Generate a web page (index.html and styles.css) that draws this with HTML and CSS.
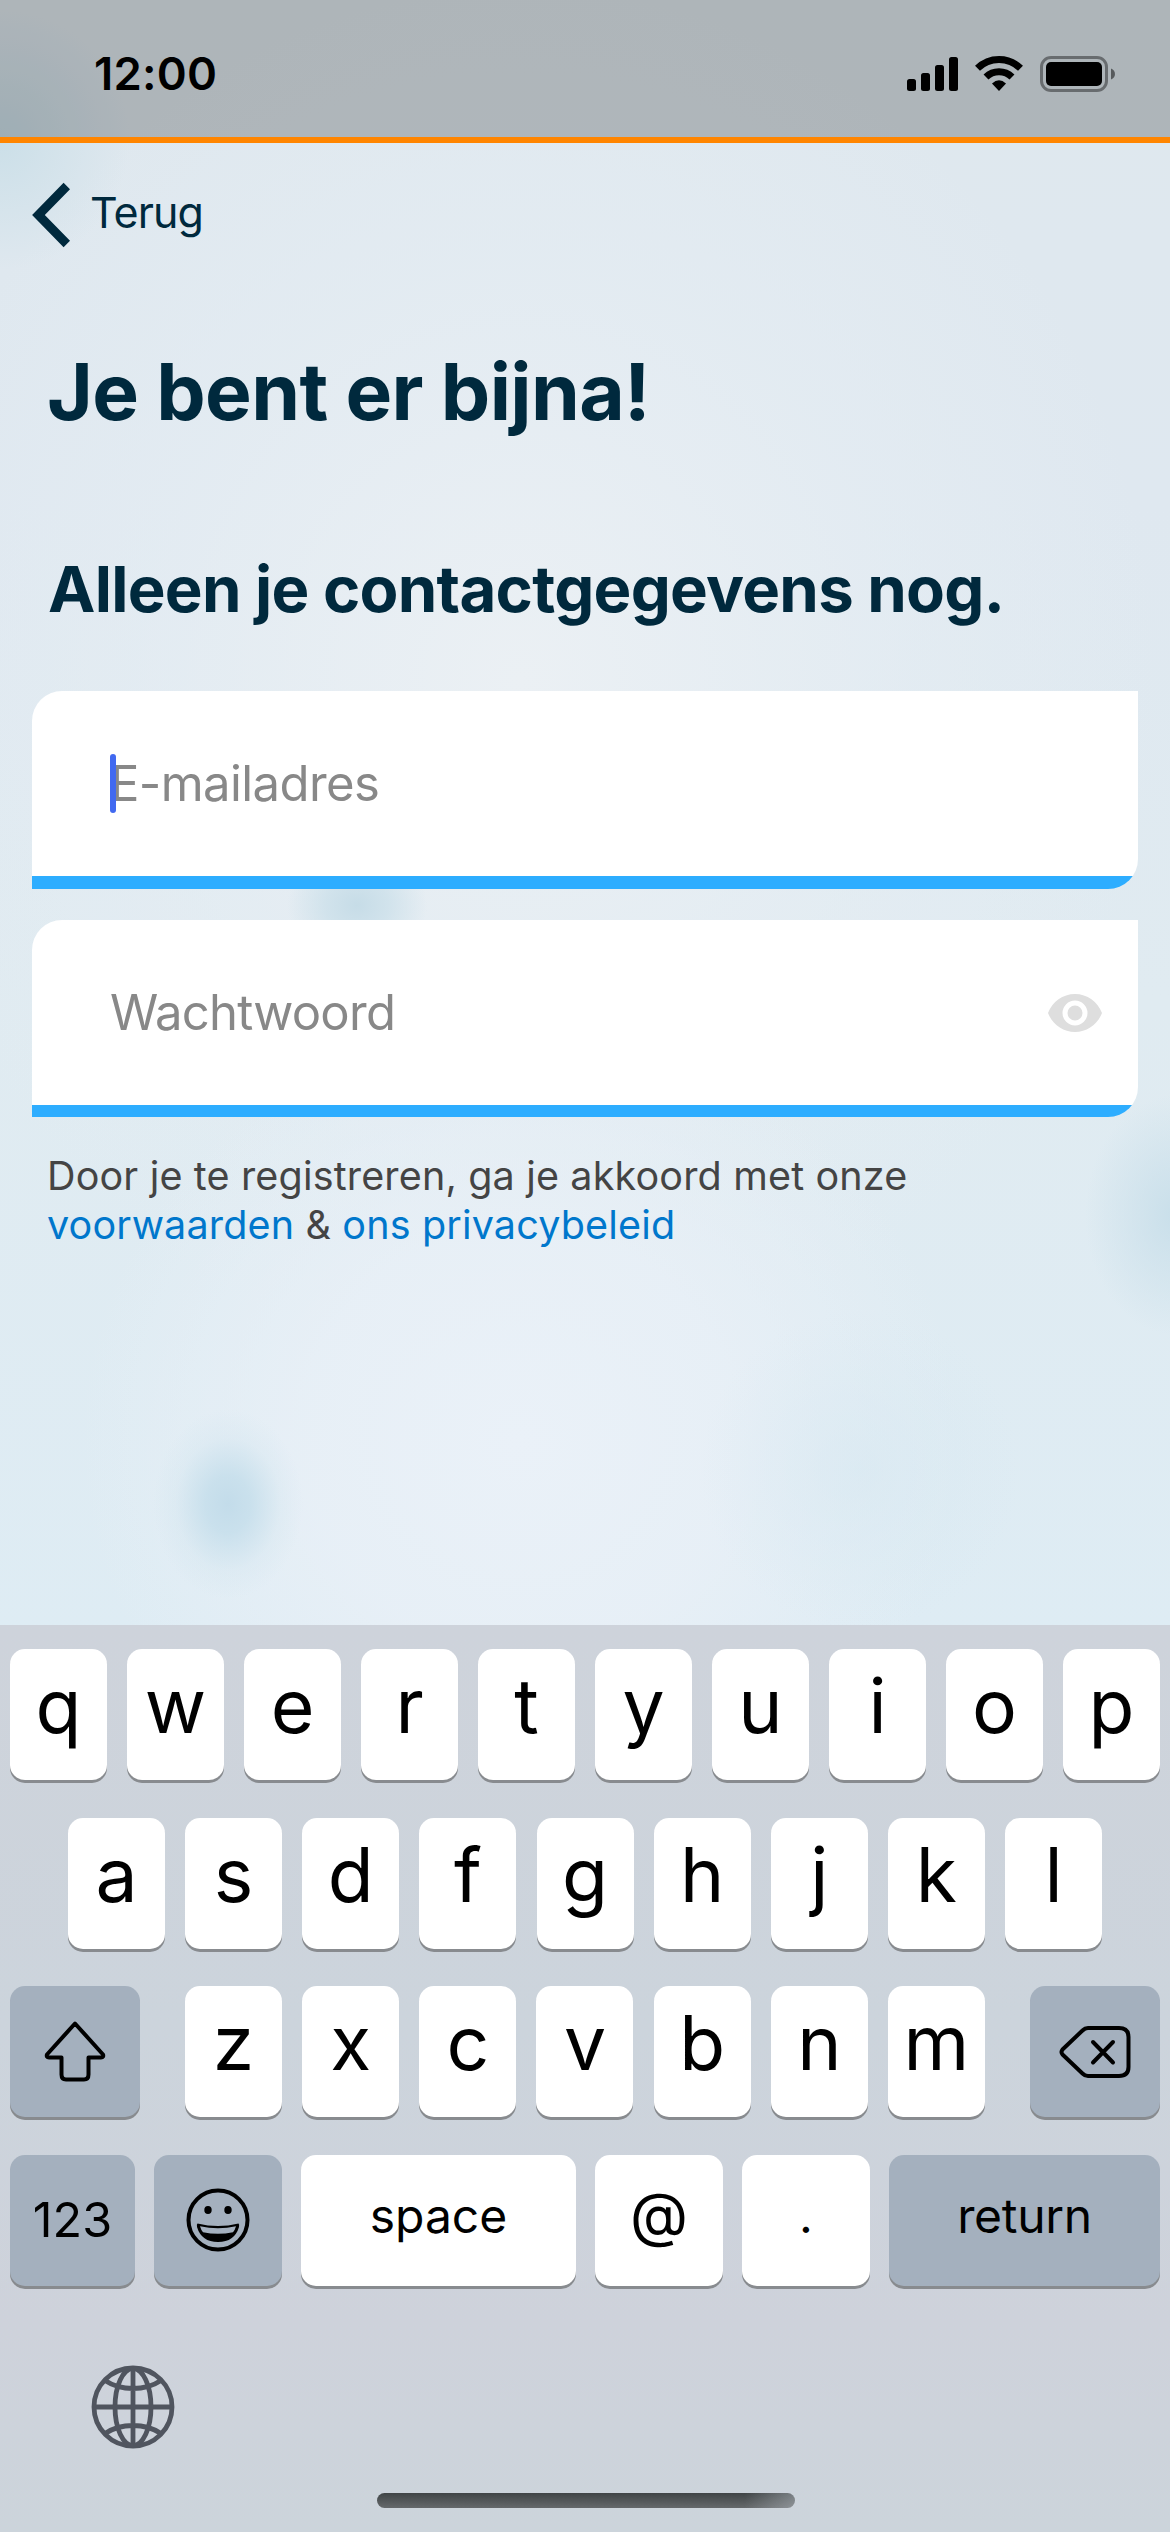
FILE: index.html
```html
<!DOCTYPE html>
<html lang="nl">
<head>
<meta charset="utf-8">
<title>Registreren</title>
<link rel="stylesheet" href="styles.css">
</head>
<body>
<div class="screen">
  <header class="status">
    <span class="time">12:00</span>
    <svg class="status-icons" width="210" height="38" viewBox="0 0 210 38">
      <rect x="0" y="24" width="9" height="12" rx="2.5"/>
      <rect x="14" y="18" width="9" height="18" rx="2.5"/>
      <rect x="28" y="10" width="9" height="26" rx="2.5"/>
      <rect x="42" y="2" width="9" height="34" rx="2.5"/>
      <g fill="none" stroke="#000" stroke-width="7">
        <path d="M70.5 13.3A30.500 30.500 0 0 1 113.500 13.300"/>
        <path d="M79 22.100A18.500 18.500 0 0 1 105 22.100"/>
      </g>
      <path d="M85 28.500Q92 22.200 99 28.500L92 36Z"/>
      <rect x="134.500" y="2.500" width="65" height="33" rx="9.500" fill="none" stroke="#000" stroke-opacity=".4" stroke-width="3"/>
      <rect x="139" y="7" width="56" height="24" rx="5"/>
      <path d="M204 13.500C209.300 15.500 209.300 22.500 204 24.500Z" opacity=".5"/>
    </svg>
  </header>
  <main class="page">
    <nav class="back">
      <svg width="38" height="74" viewBox="0 0 38 74"><path d="M34.800 8L6.400 37L34.800 66" fill="none" stroke="#00293d" stroke-width="9"/></svg>
      <span>Terug</span>
    </nav>
    <h1>Je bent er bijna!</h1>
    <h2>Alleen je contactgegevens nog.</h2>
    <div class="field"><span class="caret"></span><span class="mail">E-mailadres</span></div>
    <div class="field second"><span class="pass">Wachtwoord</span>
      <svg class="eye" width="54" height="38" viewBox="0 0 54 38"><path fill="#dedede" fill-rule="evenodd" d="M27 0C14.700 0 4.300 7.800 0 19C4.300 30.200 14.700 38 27 38S49.700 30.200 54 19C49.700 7.800 39.300 0 27 0ZM27 31.500A12.500 12.500 0 1 1 27 6.500A12.500 12.500 0 0 1 27 31.500ZM27 11.500A7.500 7.500 0 1 0 27 26.500A7.500 7.500 0 0 0 27 11.500Z"/></svg>
    </div>
    <p class="terms">Door je te registreren, ga je akkoord met onze<br><a>voorwaarden</a> &amp; <a>ons privacybeleid</a></p>
  </main>
  <section class="keyboard">
    <div class="row"><b>q</b><b>w</b><b>e</b><b>r</b><b>t</b><b>y</b><b>u</b><b>i</b><b>o</b><b>p</b></div>
    <div class="row mid"><b>a</b><b>s</b><b>d</b><b>f</b><b>g</b><b>h</b><b>j</b><b>k</b><b>l</b></div>
    <div class="row third">
      <b class="dark wide"><svg width="62" height="64" viewBox="0 0 62 64"><path d="M31 3.500L59 34.500Q60 37.500 57 37.500H44.500V54.500Q44.500 59.500 40 59.500H22Q17.500 59.500 17.500 54.500V37.500H5Q2 37.500 3 34.500Z" fill="none" stroke="#000" stroke-width="4" stroke-linejoin="round"/></svg></b>
      <div class="letters"><b>z</b><b>x</b><b>c</b><b>v</b><b>b</b><b>n</b><b>m</b></div>
      <b class="dark wide"><svg width="72" height="54" viewBox="0 0 72 54"><g fill="none" stroke="#000" stroke-width="4" stroke-linecap="round" stroke-linejoin="round"><path d="M29 3H60Q69.500 3 69.500 12V42Q69.500 51 60 51H29Q26 51 23.500 48.500L3.500 29.500Q1.500 27 3.500 24.500L23.500 5.500Q26 3 29 3Z"/><path d="M34 17L54 37.500M54 17L34 37.500"/></g></svg></b>
    </div>
    <div class="row bottom">
      <b class="dark num">123</b>
      <b class="dark"><svg width="64" height="64" viewBox="0 0 64 64"><circle cx="32" cy="32" r="29.500" fill="none" stroke="#000" stroke-width="4"/><ellipse cx="22" cy="22" rx="3.700" ry="4"/><ellipse cx="42" cy="22" rx="3.700" ry="4"/><path fill-rule="evenodd" d="M11.500 35.500Q32 40.500 52.500 35.500Q53.500 36 53 39Q48.500 54 32 54Q15.500 54 11 39Q10.500 36 11.500 35.500ZM14 38.300Q15 42 17 44.200Q32 47.500 47 44.200Q49 42 50 38.300Q32 42.300 14 38.300Z"/></svg></b>
      <b class="word">space</b><b class="at">@</b><b class="dot">.</b><b class="dark word return">return</b>
    </div>
    <svg class="globe" width="84" height="84" viewBox="0 0 84 84"><g fill="none" stroke="#50555f" stroke-width="4.800"><circle cx="42" cy="42" r="39"/><ellipse cx="42" cy="42" rx="18" ry="38.500"/><path d="M42 3V81M3 42H81M14 15.500Q26 23.500 42 23.500T70 15.500M14 68.500Q26 60.500 42 60.500T70 68.500"/></g></svg>
    <div class="home"></div>
  </section>
</div>
</body>
</html>
```
FILE: styles.css
```css
* { box-sizing: border-box; }
body { margin: 0; font-family: Inter, "Liberation Sans", sans-serif; }
.screen {
  width: 1170px; height: 2532px; overflow: hidden;
  display: flex; flex-direction: column;
  background:
    radial-gradient(ellipse 75px 95px at 228px 1504px, #c3dcea 0, rgba(197,222,235,.85) 30%, rgba(208,228,238,.3) 70%, rgba(215,232,241,0) 100%),
    radial-gradient(ellipse 70px 60px at 357px 905px, #c6dce7 0, rgba(204,224,234,.8) 45%, rgba(204,224,234,0) 100%),
    radial-gradient(ellipse 90px 120px at 1175px 1215px, #c9dfea 0, rgba(205,226,237,0) 100%),
    radial-gradient(circle at 0 140px, #cbdfe8 0, rgba(214,229,236,0) 130px),
    radial-gradient(circle at 860px 1470px, rgba(215,232,241,.6) 0, rgba(215,232,241,0) 160px),
    radial-gradient(ellipse 440px 420px at 520px 1440px, rgba(234,241,248,1) 0, rgba(233,240,247,.8) 50%, rgba(232,240,246,0) 100%),
    radial-gradient(ellipse 640px 700px at 520px 680px, #ebf0f4 0, rgba(229,237,243,.6) 60%, rgba(226,234,241,0) 100%),
    linear-gradient(#dfe8ee, #dfe8f0 500px, #e0ebf1 1000px, #deecf4 1640px);
}
.status {
  height: 143px; flex: none; border-bottom: 6px solid #ff8500;
  background: rgba(0,0,0,.22);
  display: flex; justify-content: space-between; padding: 0 53px 0 94px;
}
.time { font-size: 45.500px; font-weight: 600; line-height: 60px; padding-top: 44px; letter-spacing: .2px; }
.status-icons { margin-top: 55px; }
.page { height: 1482px; flex: none; padding: 0 32px; color: #00293d; }
.back { display: flex; align-items: center; height: 74px; margin-top: 35px; gap: 20px; font-size: 43px; line-height: 52px; letter-spacing: -.9px; }
.back svg { display: block; }
.back span { margin-top: -7px; }
h1, h2 { margin: 0; padding-left: 15px; font-weight: 700; white-space: nowrap; }
h1 { font-size: 78.500px; line-height: 96px; margin-top: 92px; letter-spacing: -.65px; }
h2 { font-size: 63.500px; line-height: 76px; margin-top: 111px; padding-left: 16px; letter-spacing: -.72px; }
.field {
  position: relative; height: 198px; margin-top: 64px;
  background: linear-gradient(#fff 185px, #2dadff 185px); border-radius: 30px 0 30px 0;
  display: flex; align-items: center; justify-content: space-between; padding: 0 36px 13px 78px;
  color: #888; font-size: 49px; letter-spacing: -.6px;
}
.second { margin-top: 31px; height: 197px; padding-bottom: 12px; letter-spacing: -.75px; }
.caret { position: absolute; left: 78px; top: 63px; width: 6px; height: 59px; border-radius: 3px; background: #4169f0; }
.terms { margin: 35px 0 0; padding-left: 15px; font-size: 39.500px; line-height: 49px; letter-spacing: .16px; color: #444; white-space: nowrap; }
.terms a { color: #0077cc; }
.keyboard {
  flex: 1; padding: 24px 10px 0; display: flex; flex-direction: column;
  background: linear-gradient(#ced3db, #ccd4dc 400px, #ced2db 700px, #ccd4db);
}
.row { display: flex; justify-content: space-between; height: 131px; margin-bottom: 37.500px; flex: none; }
.row b {
  width: 97px; height: 131px; border-radius: 15px; background: #fff; color: #000;
  box-shadow: 0 3px 0 #888b8f; font-weight: 400; font-size: 75px;
  display: flex; align-items: center; justify-content: center; line-height: 90px; padding-bottom: 17px;
}
.mid { padding: 0 58px; }
.letters { display: flex; width: 800px; justify-content: space-between; }
.row .dark { background: #a4b0be; padding-bottom: 0; }
.row .wide { width: 130px; }
.bottom { display: grid; grid-template-columns: 125px 128px 275px 128px 128px 271px; gap: 0; justify-content: space-between; }
.row.bottom b { width: auto; font-size: 48px; font-weight: 400; line-height: 60px; padding-bottom: 9px; }
.row.bottom .dark { padding-bottom: 0; }
.row.bottom .num { font-size: 48.500px; }
.row.bottom .word { padding-bottom: 9px; }
.row.bottom .return { letter-spacing: -.3px; }
.row.bottom .at { font-size: 60px; padding-bottom: 12px; }
.globe { margin: 41.500px 0 0 81px; flex: none; display: block; }
.home { width: 418px; height: 15px; border-radius: 8px; margin: 44px 0 0 367px; flex: none;
  background: linear-gradient(90deg, rgba(204,212,219,0) 88%, rgba(204,212,219,.4)), linear-gradient(#404446, #65696b); }
```
